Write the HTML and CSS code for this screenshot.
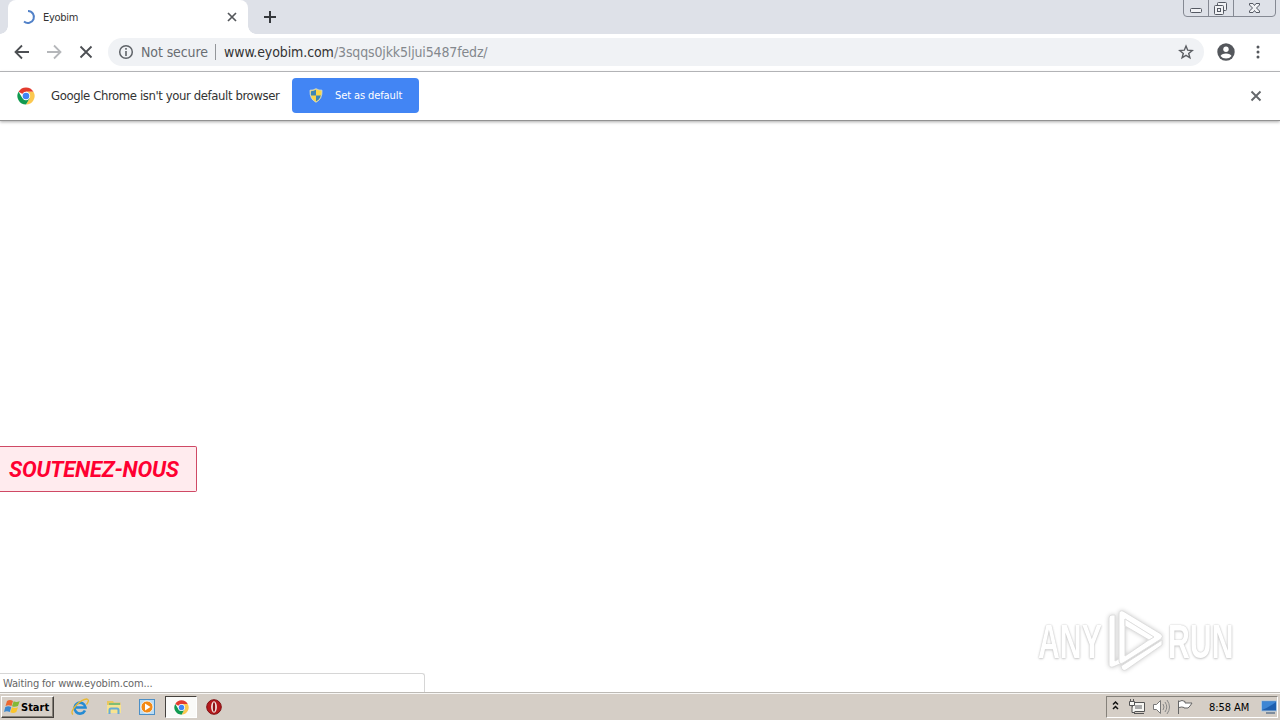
FILE: index.html
```html
<!DOCTYPE html>
<html lang="en">
<head>
    <meta charset="utf-8">
    <title>Eyobim</title>
    <link rel="stylesheet" href="styles.css">
</head>

<body>
    <!-- tab strip -->
    <div class="tabs">
        <div class="tab">
            <svg class="spinner" width="16" height="16" viewBox="0 0 16 16"><path d="M8 2a6 6 0 1 1-4 10.500" fill="none" stroke="#5181c8" stroke-width="2"/></svg>
            <span class="tab-title">Eyobim</span>
            <svg width="10" height="10" viewBox="0 0 10 10"><path d="M1 1l8 8M9 1l-8 8" stroke="#54575b" stroke-width="1.700"/></svg>
        </div>
        <svg class="plus" width="14" height="14" viewBox="0 0 14 14"><path d="M7 1v12M1 7h12" stroke="#35383c" stroke-width="2"/></svg>
        <svg class="win-buttons" width="95" height="18" viewBox="0 0 95 18">
            <path d="M.5 0v13q0 3.500 3.500 3.500h85q3.500 0 3.500-3.500V0M25.500 0v16M50.500 0v16" fill="none" stroke="#858993"/>
            <g fill="#f1f2f5" stroke="#555963">
                <rect x="7.500" y="8.500" width="11" height="4" rx="1"/>
                <rect x="34.500" y="2.500" width="9" height="8" rx="1"/>
                <rect x="31.500" y="5.500" width="9" height="9" rx="1"/>
                <rect x="34.500" y="8.500" width="3" height="3"/>
                <path d="M66.500 3.500h3.500l1.500 2 1.500-2h3.500v1.500l-3 3 3 3v1.500h-3.500l-1.500-2-1.500 2h-3.500v-1.500l3-3-3-3z"/>
            </g>
        </svg>
    </div>

    <!-- toolbar -->
    <div class="toolbar">
        <svg class="nav" width="80" height="16" viewBox="0 0 80 16" fill="none" stroke-width="1.800">
            <path d="M15 8H2M8 1.500L1.500 8 8 14.500" stroke="#4c4f53"/>
            <path d="M33 8h13M40 1.500L46.500 8 40 14.500" stroke="#b5b7ba"/>
            <path d="M66.500 2.500l11 11M77.500 2.500l-11 11" stroke="#4c4f53"/>
        </svg>
        <div class="address">
            <svg width="16" height="16" viewBox="0 0 16 16"><circle cx="8" cy="8" r="6.300" fill="none" stroke="#5f6368" stroke-width="1.500"/><path d="M8 7v5M8 4v1.700" stroke="#5f6368" stroke-width="1.600"/></svg>
            <span class="secure">Not secure</span>
            <span class="line"></span>
            <span class="host">www.eyobim.com</span><span class="path">/3sqqs0jkk5ljui5487fedz/</span>
            <svg class="star" width="16" height="16" viewBox="0 0 16 16"><path d="M8 2l1.700 4.200 4.500.3-3.500 2.900 1.200 4.400L8 11.400l-3.900 2.400 1.200-4.400-3.500-2.900 4.500-.3z" fill="none" stroke="#5b5e63" stroke-width="1.400"/></svg>
        </div>
        <svg class="user" width="18" height="18" viewBox="0 0 18 18"><circle cx="9" cy="9" r="8.700" fill="#54575c"/><circle cx="9" cy="6.200" r="2.700" fill="#fff"/><path d="M3.500 13q1-2.500 5.500-2.500t5.500 2.500Q12.500 15.500 9 15.500T3.500 13z" fill="#fff"/></svg>
        <svg class="dots" width="4" height="14" viewBox="0 0 4 14" fill="#54575c"><circle cx="2" cy="2" r="1.500"/><circle cx="2" cy="7" r="1.500"/><circle cx="2" cy="12" r="1.500"/></svg>
    </div>

    <!-- default browser bar -->
    <div class="infobar">
        <svg class="chrome" width="18" height="18" viewBox="0 0 18 18">
            <path d="M9 9L1.550 4.700A8.600 8.600 0 0 1 16.450 4.700H9z" fill="#e33b2e"/>
            <path d="M9 4.700h7.450A8.600 8.600 0 0 1 9 17.600l3.700-6.400z" fill="#fbc850"/>
            <path d="M9 9l3.700 2.200L9 17.600A8.600 8.600 0 0 1 1.550 4.700L5.300 11z" fill="#119a50"/>
            <circle cx="9" cy="9" r="4.200" fill="#fff"/><circle cx="9" cy="9" r="3.300" fill="#4285f4"/>
        </svg>
        <span class="message">Google Chrome isn't your default browser</span>
        <button class="default">
            <svg width="14" height="15" viewBox="0 0 14 15"><path d="M7 .7q3 1.800 6 1.500Q13.500 11 7 14.300.500 11 1 2.200 4 2.500 7 .7z" fill="#f9d648"/><path d="M7 1.800V7.500h5q.3-2.500 0-4.300-2.800 0-5-1.400zM7 7.500H2q1 4 5 5.700z" fill="#f9d648"/><path d="M7 1.800V7.500H2Q1.700 5 2 3.200q2.800 0 5-1.400zM7 7.500h5q-1 4-5 5.700z" fill="#3c86b4"/><path d="M7 .7q3 1.800 6 1.500Q13.500 11 7 14.300.500 11 1 2.200 4 2.500 7 .7z" fill="none" stroke="#d9dfce" stroke-width=".8"/></svg>
            <span>Set as default</span>
        </button>
        <svg class="close" width="12" height="12" viewBox="0 0 12 12"><path d="M1.500 1.500l9 9M10.500 1.500l-9 9" stroke="#64676b" stroke-width="1.900"/></svg>
    </div>

    <!-- page -->
    <div class="page">
        <div class="support">SOUTENEZ-NOUS</div>
        <div class="watermark">
            <span class="any">ANY</span>
            <svg width="60" height="64" viewBox="0 0 60 64" fill="#fff" stroke="#dedede" stroke-linejoin="round">
                <path d="M4 9q0-3 3-3h3v46l7-4v6L8 58q-4 1-4-3z"/>
                <path fill-rule="evenodd" d="M14 5q0-4 4-3l38 23q3 2 0 5L18 54q-4 2-4-3zM20 10v37l28-19z"/>
                <path d="M20 10v7l24 14 5-3zM16 57l41-26v5L21 61q-4 2-5-4z"/>
            </svg>
            <span class="run">RUN</span>
        </div>
        <div class="status">Waiting for www.eyobim.com...</div>
    </div>

    <!-- taskbar -->
    <div class="taskbar">
        <div class="start">
            <svg width="17" height="16" viewBox="0 0 17 16"><path d="M3 2q3-2 6 0L7.500 7q-3-1.500-6 0z" fill="#ec6830"/><path d="M9.700 2.300q3 1.500 6-.3L14 7q-3 1.500-6 .3z" fill="#83b936"/><path d="M1.300 8q3-1.500 6 0L5.800 13q-3-1.500-5.800 0z" fill="#3c88cf"/><path d="M8 8.300q3 1.500 6 0L12.300 13q-3 2-6 .3z" fill="#fbc52c"/></svg>
            <span>Start</span>
        </div>
        <div class="apps">
            <svg width="18" height="18" viewBox="0 0 18 18"><path d="M14 12.500A5.500 5.500 0 1 1 14.500 9.500H5" fill="none" stroke="#258bd3" stroke-width="2.600"/><path d="M2 16.500Q-1 14 5 7.500T16 1q3 1-.5 5.500" fill="none" stroke="#e8b830" stroke-width="1.300"/></svg>
            <svg width="18" height="18" viewBox="0 0 18 18"><path d="M2 3h6l1 1.500h6.500V15H2z" fill="#e9c75f"/><path d="M4 5h11v5H4z" fill="#80bd75"/><path d="M2 7h14v8H2z" fill="#f7e391"/><path d="M4.500 16v-4q0-1.500 1.500-1.500h6q1.500 0 1.500 1.500v4" fill="none" stroke="#65acd6" stroke-width="2"/></svg>
            <svg width="18" height="18" viewBox="0 0 18 18"><rect x="1.500" y="1.500" width="15" height="15" fill="#b9dcf4" stroke="#4c8fc6"/><circle cx="9" cy="9" r="6" fill="#f28a16" stroke="#fff" stroke-width=".8"/><path d="M7 5.500v7L12.500 9z" fill="#fff"/></svg>
        </div>
        <div class="active">
            <svg width="15" height="15" viewBox="0 0 18 18">
                <path d="M9 9L1.550 4.700A8.600 8.600 0 0 1 16.450 4.700H9z" fill="#e33b2e"/>
                <path d="M9 4.700h7.450A8.600 8.600 0 0 1 9 17.600l3.700-6.400z" fill="#fbc850"/>
                <path d="M9 9l3.700 2.200L9 17.600A8.600 8.600 0 0 1 1.550 4.700L5.300 11z" fill="#119a50"/>
                <circle cx="9" cy="9" r="4.200" fill="#fff"/><circle cx="9" cy="9" r="3.300" fill="#4285f4"/>
            </svg>
        </div>
        <svg class="opera" width="16" height="16" viewBox="0 0 16 16"><circle cx="8" cy="8" r="7.300" fill="#b5191c" stroke="#7e1013"/><ellipse cx="8" cy="8" rx="2.900" ry="5.700" fill="#f4e9e4"/><ellipse cx="8" cy="8" rx="1.200" ry="4.700" fill="#8e1215"/></svg>
        <div class="tray">
            <svg width="90" height="18" viewBox="0 0 90 18" fill="none">
                <path d="M6 6.500L8.500 4 11 6.500M6 11l2.500-2.500L11 11" stroke="#111" stroke-width="1.500"/>
                <path d="M25.500 4.500h12v9h-12zM27 15.500h10" stroke="#555" fill="#f7f7f3"/>
                <path d="M28 7h7v4h-7z" fill="#aaa"/>
                <path d="M22.500 3.500h5v4h-5zM23.500 1v2M26.500 1v2M25 8v6.500h3" stroke="#555" fill="#f7f7f3"/>
                <path d="M46.500 6.500h3l4-4v13l-4-4h-3z" fill="#fff" stroke="#777"/>
                <path d="M56 6q2 3 0 6M58 4q3.500 5 0 10M60 2q5 7 0 14" stroke="#888"/>
                <path d="M71.500 16V2.500M72 3.500q3-2 6 0v1.500h7l-2 3-2 2h-4V9.500q-2-1-5 0" fill="#fff" stroke="#666"/>
            </svg>
            <span class="clock">8:58 AM</span>
            <svg width="16" height="14" viewBox="0 0 16 14"><path d="M.5 1h15v10H.500z" fill="#1e5fae" stroke="#a8c5df"/><path d="M1 10Q7 8 15 2v-.5H1z" fill="#3d86d4"/><path d="M5 13h9" stroke="#284c75"/></svg>
        </div>
    </div>
</body>

</html>
```
FILE: styles.css
```css
* {
    margin: 0;
    padding: 0;
    box-sizing: border-box;
}

body {
    width: 1280px;
    height: 720px;
    overflow: hidden;
    display: flex;
    flex-direction: column;
    background-color: #fff;
    font-family: "DejaVu Sans Condensed", "DejaVu Sans", sans-serif;
    font-size: 11px;
    color: #333;
    white-space: nowrap;
}

svg {
    display: block;
    flex-shrink: 0;
}

.tabs {
    height: 34px;
    display: flex;
    background-color: #dee1e8;
    padding-left: 8px;
}

.tab {
    position: relative;
    width: 240px;
    height: 34px;
    display: flex;
    align-items: center;
    background-color: #fff;
    border-radius: 8px 8px 0 0;
    padding: 0 11px 0 12px;
}

/* curved feet of the tab */
.tab::before,
.tab::after {
    content: "";
    position: absolute;
    bottom: 0;
    width: 8px;
    height: 8px;
}

.tab::before {
    left: -8px;
    background: radial-gradient(circle at 0 0, #dee1e8 7.500px, #fff 8px);
}

.tab::after {
    right: -8px;
    background: radial-gradient(circle at 100% 0, #dee1e8 7.500px, #fff 8px);
}

.tab-title {
    flex: 1;
    margin-left: 7px;
    letter-spacing: -0.3px;
}

.plus {
    margin: 10px 0 0 15px;
}

.win-buttons {
    margin-left: auto;
    margin-right: 2px;
}

.toolbar {
    height: 38px;
    display: flex;
    align-items: center;
    padding: 0 20px 2px 14px;
    border-bottom: 1px solid #b4b5b8;
}

.address {
    width: 1096px;
    height: 28px;
    flex-shrink: 0;
    margin-left: 14px;
    padding: 0 10px;
    display: flex;
    align-items: center;
    border-radius: 14px;
    background-color: #f0f2f5;
    font-size: 14px;
}

.secure {
    width: 67px;
    margin-left: 7px;
    color: #696d72;
    letter-spacing: -0.1px;
}

.line {
    width: 1px;
    height: 16px;
    margin: 0 8px 0 7px;
    background-color: #93969a;
}

.host {
    width: 110px;
    letter-spacing: -0.1px;
}

.path {
    color: #84888d;
    letter-spacing: -0.15px;
}

.star {
    margin-left: auto;
}

.user {
    margin-left: 13px;
}

.dots {
    margin-left: auto;
}

.toolbar .user {
    margin-left: 13px;
}

.infobar {
    height: 49px;
    display: flex;
    align-items: center;
    padding: 0 18px 1px 17px;
    border-bottom: 1px solid #929292;
    box-shadow: 0 1px 3px #aaa;
}

.message {
    width: 229px;
    margin: 0 12px 0 16px;
    font-size: 13px;
    letter-spacing: -0.4px;
}

.default {
    width: 127px;
    height: 35px;
    display: flex;
    align-items: center;
    padding-left: 17px;
    gap: 12px;
    border: none;
    border-radius: 4px;
    background-color: #4285f4;
    color: #fff;
    font: inherit;
    letter-spacing: -0.1px;
}

.close {
    margin-left: auto;
}

.page {
    flex: 1;
    display: flex;
    flex-direction: column;
}

.support {
    width: 197px;
    height: 46px;
    margin-top: 325px;
    padding-left: 9px;
    border: 1px solid #cf4965;
    border-left: none;
    border-radius: 0 2px 2px 0;
    background-color: #ffebee;
    color: #ff0031;
    font: italic bold 22px/45px Roboto, sans-serif;
    letter-spacing: -0.22px;
}

.watermark {
    height: 64px;
    margin: 117px 46px 0 0;
    display: flex;
    align-items: center;
    justify-content: flex-end;
    color: #fff;
    font: bold 48px "Liberation Sans", sans-serif;
    text-shadow: 0 0 2px #bbb, 0 1px 3px #ccc;
}

.watermark svg {
    margin-right: 3px;
    margin-left: 1px;
    filter: drop-shadow(0 0 2px #ccc);
}

.any,
.run {
    width: 66px;
    transform: scaleX(0.63);
    transform-origin: left;
}

.status {
    width: 425px;
    height: 19px;
    margin-top: auto;
    padding-left: 3px;
    line-height: 19px;
    border: 1px solid #d6d6d6;
    border-left: none;
    border-bottom: none;
    border-radius: 0 3px 0 0;
    color: #666;
    letter-spacing: -0.15px;
}

.taskbar {
    height: 28px;
    display: flex;
    align-items: center;
    padding: 1px 2px 0 1px;
    background-color: #d5cec6;
    border-top: 1px solid #bdbab5;
    box-shadow: inset 0 1px #f8f7f5;
}

.start {
    width: 53px;
    height: 22px;
    display: flex;
    align-items: center;
    padding-left: 2px;
    border: 1px solid;
    border-color: #fff #45413d #45413d #fff;
    box-shadow: inset -1px -1px #858078;
    color: #000;
    font-weight: bold;
    letter-spacing: 0;
}

.apps {
    display: flex;
    gap: 15.5px;
    margin: 0 9px 0 17px;
}

.active {
    width: 32px;
    height: 22px;
    display: flex;
    align-items: center;
    justify-content: center;
    background-color: #fafaf8;
    border: 1px solid;
    border-color: #45413d #fff #fff #45413d;
}

.opera {
    margin-left: 9px;
}

.tray {
    width: 172px;
    height: 22px;
    margin-left: auto;
    display: flex;
    align-items: center;
    border: 1px solid;
    border-color: #85817a #fff #fff #85817a;
}

.clock {
    width: 42px;
    margin: 0 10px 0 12px;
    color: #000;
    letter-spacing: -0.05px;
}
```
